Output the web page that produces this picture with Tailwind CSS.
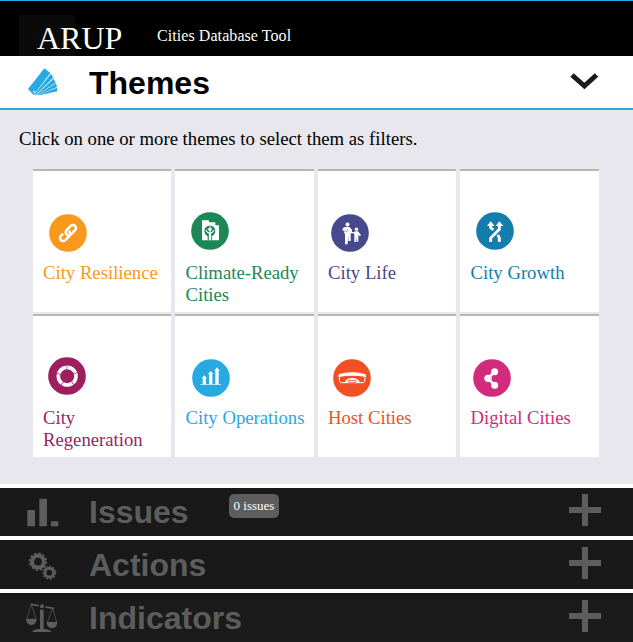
<!DOCTYPE html>
<html lang="en">
<head>
<meta charset="utf-8">
<title>Cities Database Tool</title>
<script src="https://cdn.jsdelivr.net/npm/@tailwindcss/browser@4"></script>
</head>
<body class="w-[633px] h-[642px] overflow-hidden bg-white font-['Liberation_Serif',serif] text-black">
<header class="h-[56px] border-t border-[#27a9e1] bg-black text-white flex">
  <div class="ml-[19px] mt-[14px] h-[41px] w-[56px] bg-[#0a0a0a] pl-[18px] pt-[5px] text-[32px] leading-[37px] whitespace-nowrap">ARUP</div>
  <div class="ml-[82px] mt-[26px] text-[16px] leading-[18px] tracking-[0.070px]">Cities Database Tool</div>
</header>
<section>
  <div class="h-[54px] border-b-2 border-[#27a9e1] flex items-center">
    <svg class="ml-[27px] w-[32px] h-[30px] shrink-0" viewBox="81 202 96 90">
      <path fill="#27a9e1" d="M84 268 L133 206 L151 220 L101 286 Z M104 284 L153 222 L160 234 L106 286Z M108 286 L161 237 L167 249 L109 287Z M112 286 L168 251 L171 262 L113 287Z M116 286 L171 264 L172 275 L118 287Z"/>
      <circle cx="103" cy="276" r="3" fill="#fff"/>
    </svg>
    <h2 class="ml-[30px] mt-[2px] grow font-['Liberation_Sans',sans-serif] font-bold text-[32px] leading-[37px]">Themes</h2>
    <svg class="mr-[34px] mt-[-2px] w-[30px] h-[20px]" viewBox="0 0 30 20"><path d="M3 4 L15.400 15 L27.500 4" fill="none" stroke="#1a1a1a" stroke-width="5"/></svg>
  </div>
  <div class="h-[374px] bg-[#e8e7ed] pt-[18px]">
    <p class="ml-[19px] text-[18.720px] leading-[22px]">Click on one or more themes to select them as filters.</p>
    <div class="ml-[32.600px] mt-[18.500px] w-[566px] grid grid-cols-4 gap-x-[4px] gap-y-[2px] text-[18.720px] leading-[22px]">
      <div class="h-[143px] bg-white border-t-2 border-[#c1b1b0] text-[#f8991d]">
        <div class="h-[91px] flex"><svg class="ml-[16.200px] mt-[43.300px] w-[38px] h-[38px]" viewBox="0 0 114 114"><circle cx="57" cy="57" r="56.500" fill="currentColor"/>
          <g fill="none" transform="rotate(-45 57 57)"><rect x="27" y="48" width="36" height="18" rx="9" stroke="#fff" stroke-width="8"/><path d="M51 57V48H78A9 9 0 0 1 78 66H64" stroke="currentColor" stroke-width="12"/><rect x="51" y="48" width="36" height="18" rx="9" stroke="#fff" stroke-width="8"/></g></svg></div>
        <div class="pl-[10.400px]">City Resilience</div>
      </div>
      <div class="h-[143px] bg-white border-t-2 border-[#c1b1b0] text-[#1c8856]">
        <div class="h-[91px] flex"><svg class="ml-[15.900px] mt-[41.300px] w-[38px] h-[38px]" viewBox="0 0 114 114"><circle cx="57" cy="57" r="56.500" fill="currentColor"/>
          <path fill="#fff" d="M33 25H54V31H73V40H84V85H33Z"/><circle cx="56.500" cy="57" r="16.500" fill="currentColor"/><path fill="currentColor" d="M50 68h13v17H50z"/>
          <path d="M57 43V85M45 54Q46 61 56 64M68 54Q67 61 57 64M51 49L57 57L62 49" fill="none" stroke="#fff" stroke-width="3.500"/><path d="M57 66V84" stroke="#fff" stroke-width="7"/></svg></div>
        <div class="pl-[10.400px]">Climate-Ready<br>Cities</div>
      </div>
      <div class="h-[143px] bg-white border-t-2 border-[#c1b1b0] text-[#464a8c]">
        <div class="h-[91px] flex"><svg class="ml-[13.200px] mt-[43.800px] w-[38px] h-[38px]" viewBox="0 0 114 114"><circle cx="57" cy="57" r="56.500" fill="currentColor"/>
          <g fill="#fff"><circle cx="49.500" cy="31.500" r="6"/><path d="M42 39H55L63 47V54H69L72 52H81L90 63L86 67L82 62V83H77V68L75 84H70V59L66 58H59V81H52V61L50 91H42V60L39 56L41 52L34 49L36 42Z"/><circle cx="76.500" cy="45.500" r="5"/></g><path d="M43 49L49 54M48 47L52 50" stroke="currentColor" stroke-width="2"/></svg></div>
        <div class="pl-[10.400px]">City Life</div>
      </div>
      <div class="h-[143px] bg-white border-t-2 border-[#c1b1b0] text-[#137eae]">
        <div class="h-[91px] flex"><svg class="ml-[15.900px] mt-[41.300px] w-[38px] h-[38px]" viewBox="0 0 114 114"><circle cx="57" cy="57" r="56.500" fill="currentColor"/>
          <path d="M44 90V78L70 52V38M70 90V77L65 69M44 38V47L52 54" fill="none" stroke="#fff" stroke-width="8.500"/><path fill="#fff" d="M33 42L44 28L56 42ZM59 42L70 28L82 42Z"/></svg></div>
        <div class="pl-[10.400px]">City Growth</div>
      </div>
      <div class="h-[143px] bg-white border-t-2 border-[#c1b1b0] text-[#9d1f60]">
        <div class="h-[91px] flex"><svg class="ml-[15.100px] mt-[41.800px] w-[38px] h-[38px]" viewBox="0 0 114 114"><circle cx="57" cy="57" r="56.500" fill="currentColor"/>
          <circle cx="57.500" cy="57.500" r="26.500" fill="none" stroke="#fff" stroke-width="11"/>
          <g fill="none" stroke="currentColor" stroke-width="2"><path id="arc-joint" d="M54 24L58 31L54 38"/><use href="#arc-joint" transform="rotate(72 57.500 57.500)"/><use href="#arc-joint" transform="rotate(144 57.500 57.500)"/><use href="#arc-joint" transform="rotate(216 57.500 57.500)"/><use href="#arc-joint" transform="rotate(288 57.500 57.500)"/></g></svg></div>
        <div class="pl-[10.400px]">City<br>Regeneration</div>
      </div>
      <div class="h-[143px] bg-white border-t-2 border-[#c1b1b0] text-[#27a9e1]">
        <div class="h-[91px] flex"><svg class="ml-[16.900px] mt-[43.400px] w-[38px] h-[38px]" viewBox="0 0 114 114"><circle cx="57" cy="57" r="56.500" fill="currentColor"/>
          <path fill="#fff" d="M29 58L37 49L45 58H42V76H32V58ZM48 45L56 36L64 45H61V76H51V45ZM67 35L75 25L83 35H80V76H70V35Z"/><path d="M25 76.500H87" stroke="#fff" stroke-width="2"/></svg></div>
        <div class="pl-[10.400px]">City Operations</div>
      </div>
      <div class="h-[143px] bg-white border-t-2 border-[#c1b1b0] text-[#f15025]">
        <div class="h-[91px] flex"><svg class="ml-[15.600px] mt-[43.100px] w-[38px] h-[38px]" viewBox="0 0 114 114"><circle cx="57" cy="57" r="56.500" fill="currentColor"/>
          <path d="M18 48Q57 36 97 48L95 67Q94 71 90 71H25Q21 71 20 67Z" fill="none" stroke="#fff" stroke-width="3"/><path fill="#fff" d="M17 46Q57 34 98 46V54Q57 46 18 54ZM34 72Q39 57 57 57Q76 57 82 72Z"/><path d="M47 70V64H68V70Z" fill="#fff" stroke="currentColor" stroke-width="2.500"/></svg></div>
        <div class="pl-[10.400px]">Host Cities</div>
      </div>
      <div class="h-[143px] bg-white border-t-2 border-[#c1b1b0] text-[#d32b7b]">
        <div class="h-[91px] flex"><svg class="ml-[12.900px] mt-[43.400px] w-[38px] h-[38px]" viewBox="0 0 114 114"><circle cx="57" cy="57" r="56.500" fill="currentColor"/>
          <g fill="#fff"><circle cx="65" cy="38" r="10.500"/><circle cx="45" cy="58" r="11"/><circle cx="65" cy="79" r="10.500"/></g><path d="M65 38L45 58L65 79" fill="none" stroke="#fff" stroke-width="8"/></svg></div>
        <div class="pl-[10.400px]">Digital Cities</div>
      </div>
    </div>
  </div>
</section>
<section class="mt-[4px] h-[48px] bg-[#191919] flex text-[#5d5d5d]">
  <svg class="ml-[26px] mt-[9px] w-[34px] h-[32px] shrink-0" viewBox="78 66 102 96"><path fill="currentColor" d="M82 105H105V154H82ZM118 71H141V154H118ZM153 139H175V154H153Z"/></svg>
  <h2 class="ml-[29px] mt-[6px] w-[140px] font-['Liberation_Sans',sans-serif] font-bold text-[32px] leading-[37px]">Issues</h2>
  <span class="mt-[6px] h-[24px] w-[50px] rounded-[5px] bg-[#5d5d5d] text-center text-[13px] leading-[24px] text-white whitespace-nowrap">0 issues</span>
  <svg class="ml-auto mr-[32px] mt-[6px] w-[32px] h-[32px]" viewBox="0 0 32 32"><path fill="currentColor" d="M13 0H19V13H32V19H19V32H13V19H0V13H13Z"/></svg>
</section>
<section class="mt-[4px] h-[49px] bg-[#191919] flex text-[#5d5d5d]">
  <svg class="ml-[26px] mt-[10px] w-[34px] h-[32px] shrink-0" viewBox="78 225 102 96">
    <g fill="none" stroke="currentColor"><circle cx="114" cy="260" r="17.500" stroke-width="12"/><circle cx="114" cy="260" r="25" stroke-width="5" stroke-dasharray="7.500 5.590"/><circle cx="148" cy="293" r="13" stroke-width="9"/><circle cx="148" cy="293" r="19" stroke-width="4" stroke-dasharray="6 4.853"/></g>
  </svg>
  <h2 class="ml-[29px] mt-[7px] font-['Liberation_Sans',sans-serif] font-bold text-[32px] leading-[37px]">Actions</h2>
  <svg class="ml-auto mr-[32px] mt-[7px] w-[32px] h-[32px]" viewBox="0 0 32 32"><path fill="currentColor" d="M13 0H19V13H32V19H19V32H13V19H0V13H13Z"/></svg>
</section>
<section class="mt-[4px] h-[49px] bg-[#1b1b1b] flex text-[#5d5d5d]">
  <svg class="ml-[26px] mt-[9px] w-[34px] h-[32px] shrink-0" viewBox="78 381 102 96">
    <path fill="currentColor" d="M120 404H131V462Q152 463 153 471H97Q98 463 120 462ZM78 431H110Q109 449 94 450Q79 449 78 431ZM140 441H172Q171 459 156 460Q141 459 140 441Z"/><circle cx="126" cy="394" r="6" fill="currentColor"/>
    <path d="M91 388L116 392M136 396L162 400" stroke="currentColor" stroke-width="5"/><path d="M94 388L80 432M94 388L108 432M158 399L142 442M158 399L170 442" stroke="currentColor" stroke-width="2"/>
  </svg>
  <h2 class="ml-[29px] mt-[7px] font-['Liberation_Sans',sans-serif] font-bold text-[32px] leading-[37px]">Indicators</h2>
  <svg class="ml-auto mr-[32px] mt-[7px] w-[32px] h-[32px]" viewBox="0 0 32 32"><path fill="currentColor" d="M13 0H19V13H32V19H19V32H13V19H0V13H13Z"/></svg>
</section>
</body>
</html>
